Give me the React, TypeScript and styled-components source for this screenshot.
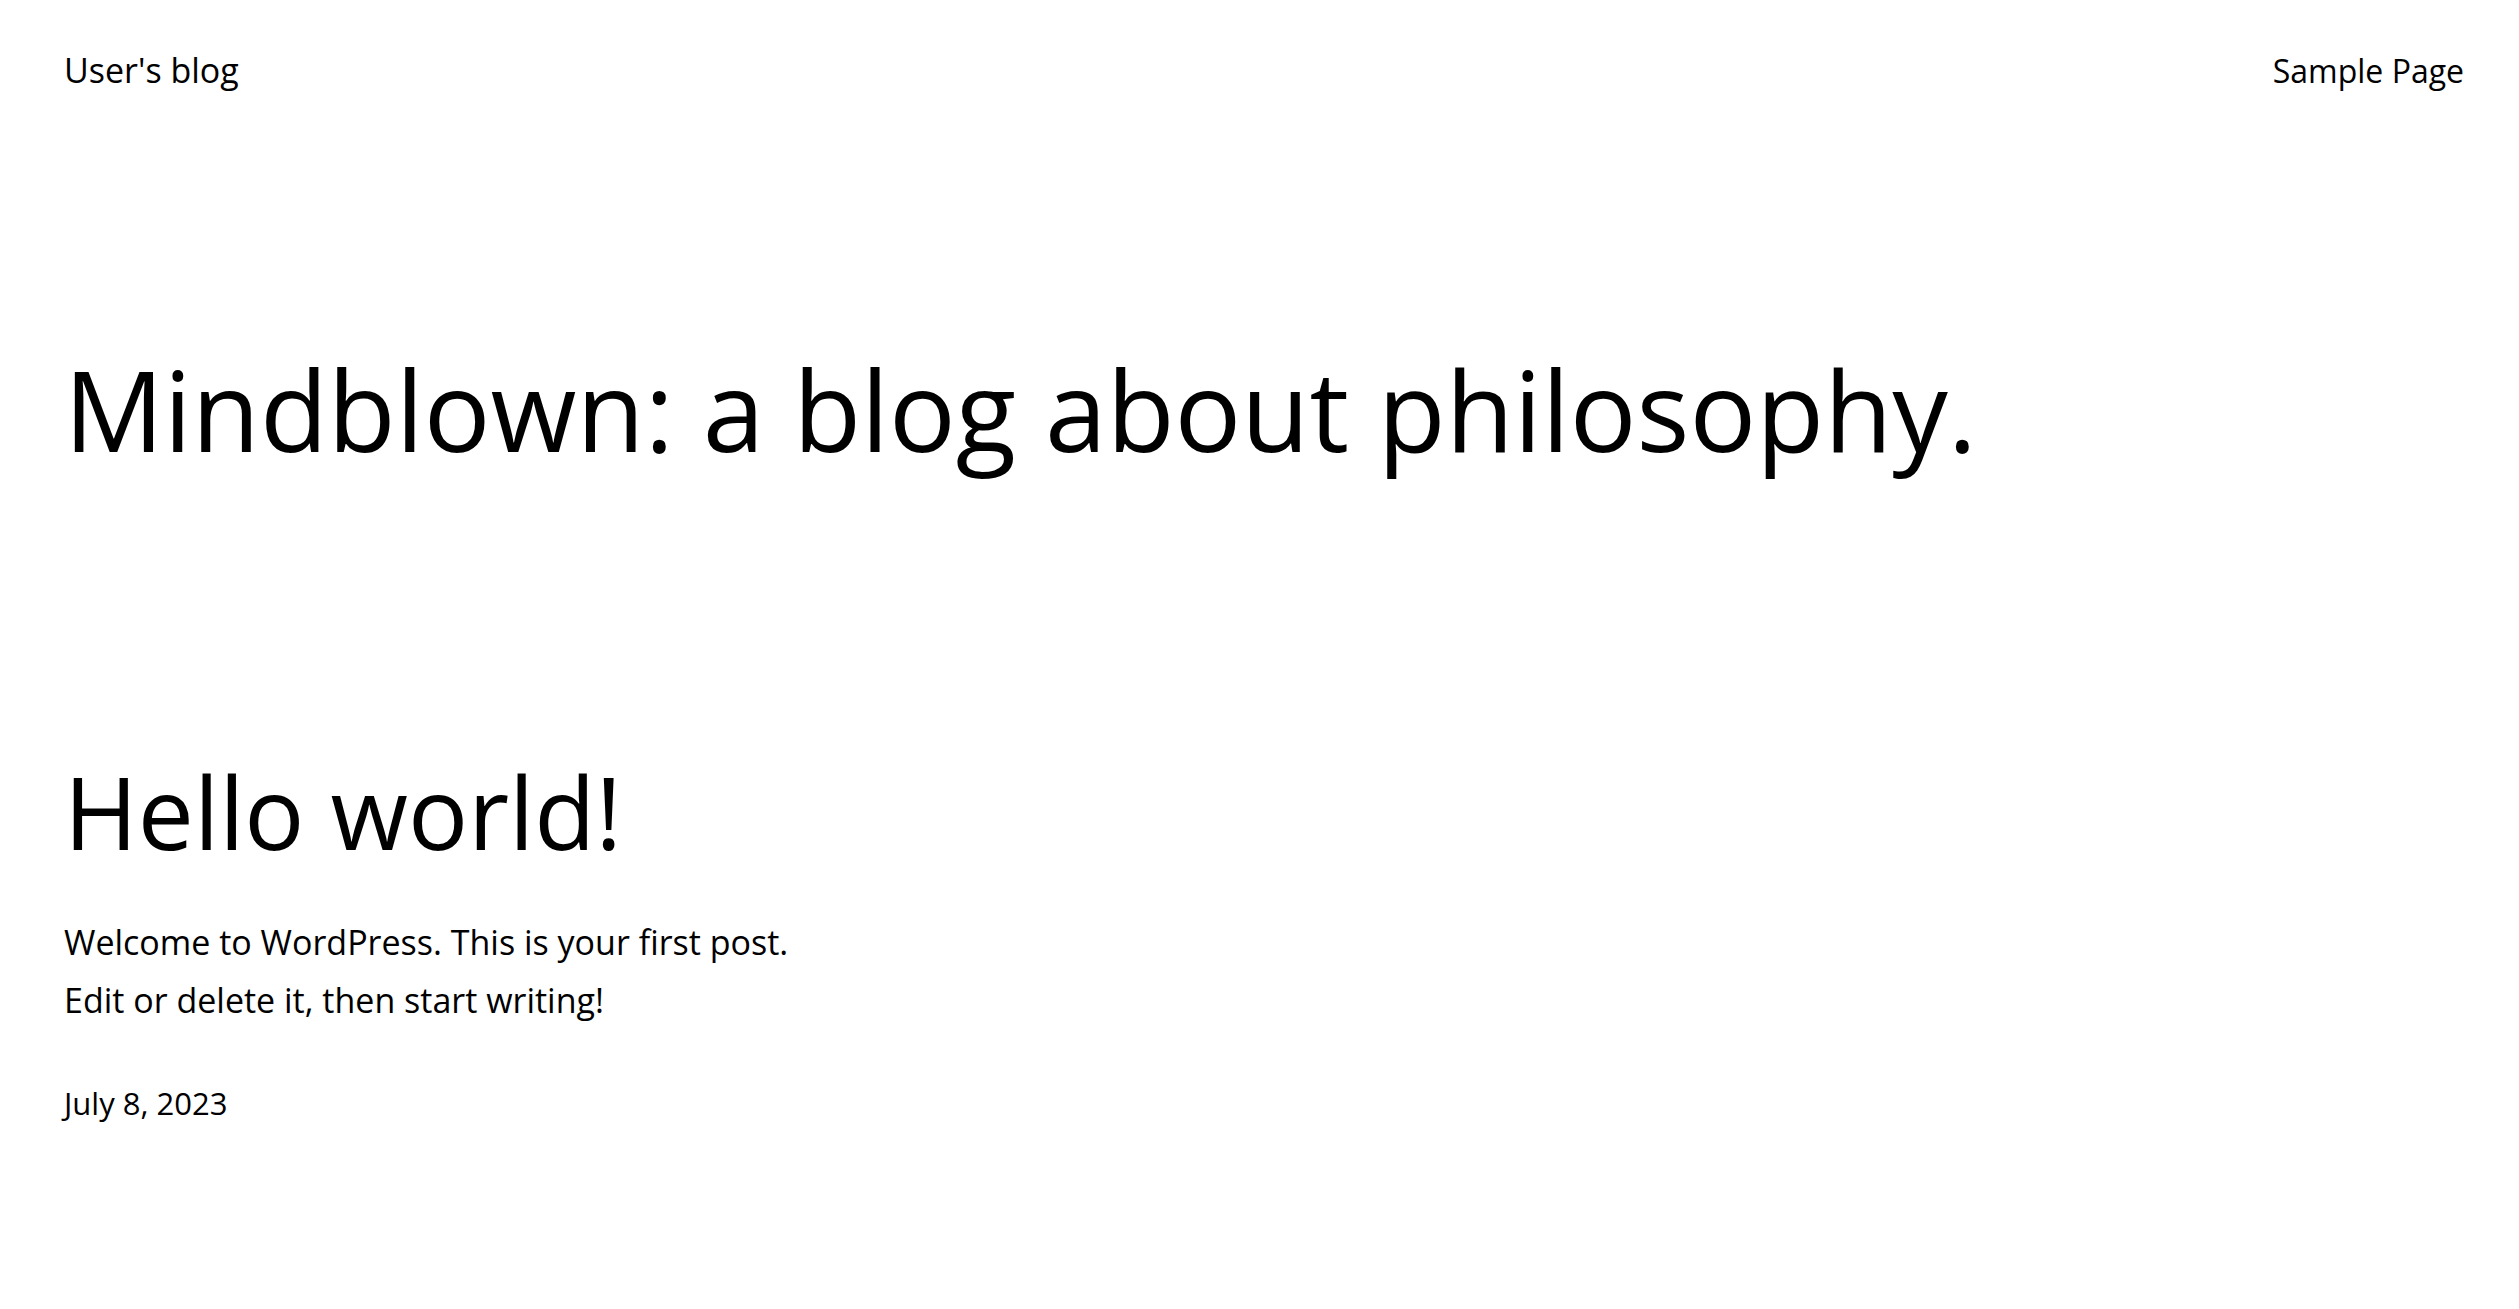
import React from "react";
import styled, { createGlobalStyle } from "styled-components";

const GlobalStyle = createGlobalStyle`
  html, body {
    margin: 0;
    padding: 0;
    background: #ffffff;
  }
  body {
    font-family: "Open Sans", "Noto Sans", "Liberation Sans", sans-serif;
    color: #000000;
    -webkit-font-smoothing: antialiased;
  }
  * { box-sizing: border-box; }
`;

const Page = styled.div`
  display: flex;
  flex-direction: column;
  padding: 0 55px 0 64px;
  min-height: 1309px;
`;

const Header = styled.header`
  display: flex;
  justify-content: space-between;
  align-items: baseline;
  padding-top: 43px;
`;

const SiteTitle = styled.a`
  font-size: 34px;
  line-height: 54.4px;
  color: #000;
  text-decoration: none;
`;

const Nav = styled.nav`
  display: flex;
  gap: 32px;
`;

const NavLink = styled.a`
  font-size: 32px;
  line-height: 54.4px;
  color: #000;
  text-decoration: none;
`;

const Main = styled.main`
  display: flex;
  flex-direction: column;
`;

const Tagline = styled.h1`
  margin: 245px 0 0;
  font-size: 111px;
  font-weight: 400;
  line-height: 1.2;
`;

const Post = styled.article`
  display: flex;
  flex-direction: column;
  margin-top: 274px;
`;

const PostTitle = styled.h2`
  margin: 0;
  font-size: 100px;
  font-weight: 400;
  line-height: 1.2;
`;

const Excerpt = styled.p`
  margin: 42px 0 0;
  max-width: 760px;
  font-size: 34px;
  line-height: 58.4px;
`;

const PostDate = styled.time`
  display: block;
  margin-top: 50px;
  font-size: 31px;
  line-height: 48px;
`;

export default function App() {
  return (
    <>
      <GlobalStyle />
      <Page>
        <Header>
          <SiteTitle href="#">User's blog</SiteTitle>
          <Nav>
            <NavLink href="#">Sample Page</NavLink>
          </Nav>
        </Header>
        <Main>
          <Tagline>Mindblown: a blog about philosophy.</Tagline>
          <Post>
            <PostTitle>Hello world!</PostTitle>
            <Excerpt>
              Welcome to WordPress. This is your first post. Edit or delete it,
              then start writing!
            </Excerpt>
            <PostDate dateTime="2023-07-08">July 8, 2023</PostDate>
          </Post>
        </Main>
      </Page>
    </>
  );
}
